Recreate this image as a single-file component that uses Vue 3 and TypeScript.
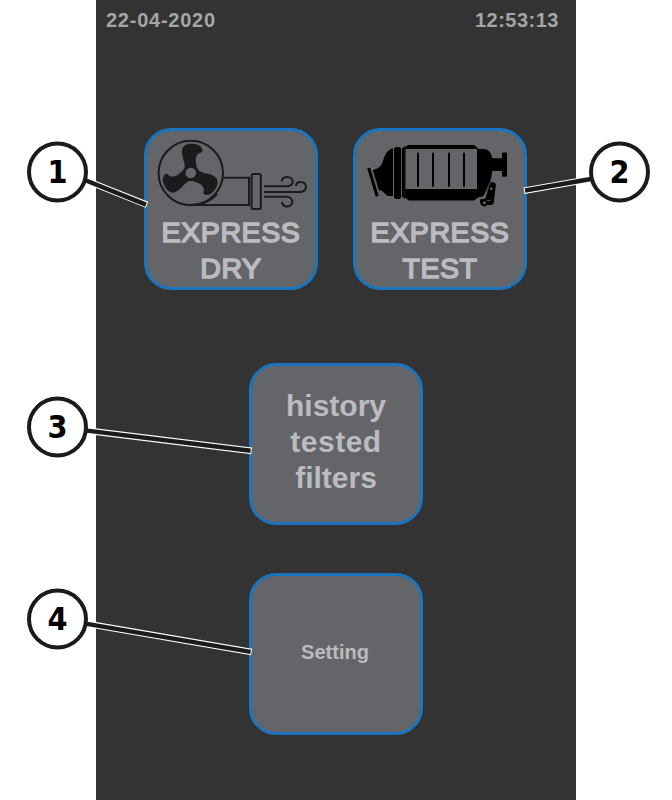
<script setup lang="ts">
interface Callout {
  id: number
  cx: number
  cy: number
  from: [number, number]
  to: [number, number]
}

const callouts: Callout[] = [
  { id: 1, cx: 57.5, cy: 172, from: [86, 180.5], to: [147, 204.8] },
  { id: 2, cx: 619.5, cy: 172, from: [591, 179], to: [524, 190.7] },
  { id: 3, cx: 57.5, cy: 427, from: [87, 430.6], to: [251.6, 450.9] },
  { id: 4, cx: 57.5, cy: 619, from: [87, 623.8], to: [251.6, 652] },
]
const historyLines: string[] = ['history', 'tested', 'filters']
const blades: number[] = [0, 120, 240]
</script>

<template>
  <div class="page">
    <main class="screen">
      <header class="status">
        <span class="date">22-04-2020</span>
        <span class="time">12:53:13</span>
      </header>

      <div class="row">
        <button class="tile express">
          <svg class="icon" width="168" height="84" viewBox="147 131 168 84" fill="none" stroke="#1b1b1d" stroke-width="2">
            <circle cx="190.8" cy="173" r="32.2" />
            <g transform="translate(190.8 173)" fill="#1b1b1d" stroke="none">
              <path
                v-for="angle in blades"
                :key="angle"
                :transform="`rotate(${angle})`"
                d="M-6-5C-5.5-12-9.500-16-8.8-23C-8-29.5 1-30.5 7.5-28C11.5-26 12.5-22 11.2-20.8C7-20.5 5-17 4.8-13C4.8-10 5.8-8 6-5Z"
              />
              <circle r="8.3" />
              <circle r="5.3" fill="#636569" />
            </g>
            <path d="M223.5 177.8H249V204.9H190.8C202 204.7 211 201 217 194" />
            <rect x="251.6" y="174.1" width="9.2" height="34.8" rx="1.5" />
            <path d="M264 186.2H287.5C294.5 186.2 294.5 177 287 177C283.5 177 281.5 179 282 181.5" />
            <path d="M264 192H299C308.5 192 307.5 181.9 301 181.9C298 181.9 296 183.5 296 186" />
            <path d="M264 196.8H287C294 197 294 206.5 287 206.6C284 206.6 282 204.7 282.2 202" />
          </svg>
          <span>EXPRESS</span>
          <span>DRY</span>
        </button>

        <button class="tile express">
          <svg class="icon" width="168" height="84" viewBox="356 131 168 84">
            <path d="M368.7 168L377.2 196.3" stroke="#000" stroke-width="3" />
            <path d="M372.8 170L376 169C381 167 382 164 384 158C386 153 388 150 392 148.5H393V196H389C386 195.5 384 192 381.5 190.5H379Z" />
            <rect x="394" y="147" width="7.1" height="52" rx="2.8" />
            <path d="M402 148.5L405 146V199L402 196.5Z" />
            <path d="M405 147.3L408 145H474L478 148.5V149H485C489 150 492 154 492.3 158.2H502V153.3Q502 152.5 503 152.5H506Q507 152.5 507 153.5V175.7Q507 176.7 506 176.7H503Q502 176.7 502 175.7V171H492.3C491 181 489 188 484 196L478 197.5L474 200.5H409L405 197.5Z" />
            <rect x="405.5" y="149" width="71.5" height="40" fill="#636569" />
            <path d="M418 153.5V186M433 153.5V186M449 153.5V186M464 153.5V186" stroke="#000" stroke-width="2" stroke-linecap="round" />
            <path d="M405 149V197" stroke="#303134" stroke-width=".6" />
            <path d="M490 183Q492 181.5 494 182.5L496 184L493.6 203.5L491.5 205H487L485 206.5Q480.5 206 480 202V199.5L485.5 198.5Z" />
            <path d="M490 182.5L483.2 197.5L480 198.7" fill="none" stroke="#636569" stroke-width=".8" />
            <g fill="#636569">
              <circle cx="491.3" cy="188.7" r="1.3" />
              <circle cx="484.3" cy="202.7" r="1.5" />
              <rect x="487" y="200" width="3.5" height=".8" />
            </g>
          </svg>
          <span>EXPRESS</span>
          <span>TEST</span>
        </button>
      </div>

      <button class="tile history">
        <span v-for="line in historyLines" :key="line">{{ line }}</span>
      </button>

      <button class="tile setting"><span>Setting</span></button>
    </main>

    <svg class="callouts" width="672" height="800" viewBox="0 0 672 800">
      <g v-for="c in callouts" :key="c.id">
        <line class="halo" :x1="c.from[0]" :y1="c.from[1]" :x2="c.to[0]" :y2="c.to[1]" />
        <line class="leader" :x1="c.from[0]" :y1="c.from[1]" :x2="c.to[0] + (c.from[0] > c.to[0] ? 1 : -1)" :y2="c.to[1] - 0.2" />
        <circle :cx="c.cx" :cy="c.cy" r="28.5" />
        <text :x="c.cx" :y="c.cy + 11">{{ c.id }}</text>
      </g>
    </svg>
  </div>
</template>

<style>
body {
  margin: 0;
  background: #fff;
}
</style>

<style scoped>
.page {
  position: relative;
  width: 672px;
  height: 800px;
  overflow: hidden;
  font-family: "Liberation Sans", Arial, sans-serif;
}
.screen {
  box-sizing: border-box;
  width: 480px;
  height: 800px;
  margin-left: 96px;
  background: #333;
  display: flex;
  flex-direction: column;
  align-items: center;
}
.status {
  box-sizing: border-box;
  width: 100%;
  height: 128px;
  padding: 8px 17px 0 10px;
  display: flex;
  justify-content: space-between;
  color: #a5a5a5;
  font-size: 20px;
  line-height: 24px;
  font-weight: bold;
}
.date {
  letter-spacing: 0.75px;
}
.time {
  letter-spacing: 0.5px;
}
.row {
  display: flex;
  gap: 35px;
  margin-right: 1px;
}
.tile {
  box-sizing: border-box;
  width: 174px;
  height: 162px;
  padding: 0;
  border: 3px solid #1b74bd;
  border-radius: 27px;
  background: #636569;
  color: #bbbbc0;
  font: bold 30px/36px "Liberation Sans", Arial, sans-serif;
  display: flex;
  flex-direction: column;
  align-items: center;
}
.express {
  font-weight: normal;
  font-size: 28.5px;
  letter-spacing: 0.6px;
  -webkit-text-stroke: 1.6px currentColor;
}
.express .icon {
  margin-bottom: -1px;
}
.icon {
  display: block;
  flex: none;
}
.history {
  margin-top: 73px;
  padding-top: 22px;
}
.history span:nth-child(2) {
  letter-spacing: 0.5px;
}
.setting {
  margin-top: 48px;
  padding-right: 2px;
  padding-bottom: 4px;
  justify-content: center;
  font-size: 20px;
}
.callouts {
  position: absolute;
  left: 0;
  top: 0;
}
.halo {
  stroke: #fff;
  stroke-width: 6.6;
}
.leader {
  stroke: #1b1b1b;
  stroke-width: 4.4;
}
.callouts circle {
  fill: #fff;
  stroke: #1b1b1b;
  stroke-width: 4;
}
.callouts text {
  font: bold 32px "DejaVu Sans Condensed", "DejaVu Sans", sans-serif;
  font-stretch: condensed;
  text-anchor: middle;
  fill: #000;
}
</style>
